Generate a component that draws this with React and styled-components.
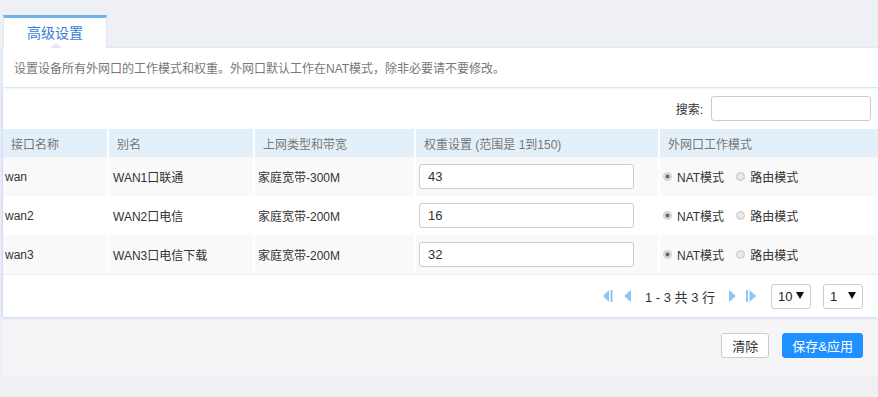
import React from 'react';
import styled, { createGlobalStyle } from 'styled-components';

const GlobalStyle = createGlobalStyle`
  html, body {
    margin: 0;
    padding: 0;
    background: #eef0f4;
    font-family: "Liberation Sans", "Noto Sans CJK SC", sans-serif;
    font-size: 12px;
    color: #333;
  }
`;

const Page = styled.div`
  padding-top: 15px;
  padding-left: 3px;
  height: 397px;
  box-sizing: border-box;
  overflow: hidden;
`;

const TabBar = styled.div`
  display: flex;
  height: 33px;
`;

const Tab = styled.div`
  position: relative;
  width: 104px;
  box-sizing: border-box;
  background: #fff;
  border-top: 3px solid #6db3f2;
  border-left: 1px solid #e2e6ee;
  border-right: 1px solid #e2e6ee;
  color: #3a7bd5;
  font-size: 14px;
  display: flex;
  align-items: center;
  justify-content: center;
  padding-bottom: 2px;

  &:after {
    content: '';
    position: absolute;
    left: 46px;
    bottom: 0;
    border-width: 0 6px 5px 6px;
    border-style: solid;
    border-color: transparent transparent #e4e8f0 transparent;
  }
`;

const Workspace = styled.div`
  background: #f5f5f7;
  height: 328px;
`;

const Panel = styled.div`
  background: #fff;
  box-shadow: 0 1px 3px #c8d6f6, -1px 0 2px #d4e0f8;
`;

const Desc = styled.div`
  height: 40px;
  box-sizing: border-box;
  padding-left: 11px;
  display: flex;
  align-items: center;
  color: #777;
  font-size: 12px;
  border-bottom: 1px solid #dbe6f8;
  box-shadow: 0 1px 2px #eef3fc;
`;

const SearchRow = styled.div`
  height: 41px;
  display: flex;
  align-items: center;
  justify-content: flex-end;
  padding-right: 7px;
  gap: 8px;
  color: #333;
`;

const TextInput = styled.input`
  box-sizing: border-box;
  width: ${({ w }) => w}px;
  height: 25px;
  border: 1px solid #ccc;
  border-radius: 3px;
  padding: 0 8px;
  font-family: "Liberation Sans", sans-serif;
  font-size: 13px;
  color: #333;
  outline: none;
  background: #fff;
`;

const Table = styled.table`
  width: 100%;
  border-collapse: collapse;
  table-layout: fixed;
`;

const Th = styled.th`
  height: 28px;
  background: #e3f0fa;
  color: #777;
  font-weight: normal;
  text-align: left;
  padding: 0 0 0 8px;
  border-right: 2px solid #fff;
  font-size: 12px;

  &:last-child {
    border-right: none;
  }
`;

const Tr = styled.tr`
  background: ${({ striped }) => (striped ? '#f9f9f9' : '#fff')};
`;

const Td = styled.td`
  height: 39px;
  padding: 0 0 0 ${({ pad }) => pad ?? 3}px;
  border-right: 2px solid #fff;
  color: #333;
  font-size: 12px;

  &:last-child {
    border-right: none;
  }
`;

const RadioGroup = styled.div`
  display: flex;
  align-items: center;
  gap: 12px;
`;

const Radio = styled.label`
  display: flex;
  align-items: center;
  gap: 5px;
  color: #333;
`;

const Dot = styled.span`
  width: 9px;
  height: 9px;
  box-sizing: border-box;
  border-radius: 50%;
  border: 1px solid #c9c9c9;
  background: radial-gradient(circle, ${({ on }) => (on ? '#666 0, #666 1.5px, #e6e6e6 2.5px' : '#ececec 0')}, #e0e0e0 100%);
`;

const TableFoot = styled.div`
  border-top: 1px solid #eee;
  height: 42px;
  display: flex;
  align-items: center;
  justify-content: flex-end;
  padding-right: 15px;
`;

const Pager = styled.div`
  display: flex;
  align-items: center;
  margin-right: 14px;
`;

const PageIcon = styled.svg`
  width: 12px;
  height: 14px;
  margin-right: ${({ mr }) => mr}px;
  fill: #8ec4f6;
`;

const PageText = styled.span`
  font-family: "Liberation Sans", "Noto Sans CJK SC", sans-serif;
  font-size: 13px;
  color: #333;
  margin: 0 11px 0 2px;
`;

const Select = styled.div`
  box-sizing: border-box;
  width: 40px;
  height: 25px;
  border: 1px solid #ccc;
  border-radius: 3px;
  display: flex;
  align-items: center;
  padding-left: 6px;
  margin-left: ${({ ml }) => ml}px;
  font-size: 13px;
  color: #222;
  position: relative;
  background: #fff;
`;

const Arrow = styled.span`
  position: absolute;
  right: 6px;
  top: 7px;
  border-width: 7px 4px 0 4px;
  border-style: solid;
  border-color: #111 transparent transparent transparent;
`;

const Actions = styled.div`
  display: flex;
  justify-content: flex-end;
  gap: 13px;
  padding: 16px 15px 0 0;
`;

const Button = styled.button`
  height: 25px;
  box-sizing: border-box;
  padding: 0 ${({ primary }) => (primary ? 9 : 10)}px;
  border-radius: 3px;
  border: 1px solid ${({ primary }) => (primary ? '#1e90ff' : '#ccc')};
  background: ${({ primary }) => (primary ? '#1e90ff' : '#fff')};
  color: ${({ primary }) => (primary ? '#fff' : '#333')};
  font-family: "Liberation Sans", "Noto Sans CJK SC", sans-serif;
  font-size: 13px;
  cursor: pointer;
`;

const rows = [
  { name: 'wan', alias: 'WAN1口联通', type: '家庭宽带-300M', weight: '43' },
  { name: 'wan2', alias: 'WAN2口电信', type: '家庭宽带-200M', weight: '16' },
  { name: 'wan3', alias: 'WAN3口电信下载', type: '家庭宽带-200M', weight: '32' },
];

const First = () => (
  <PageIcon viewBox="0 0 12 14" mr={8}>
    <polygon points="7,1 7,13 1,7" />
    <rect x="8.5" y="1" width="2" height="12" />
  </PageIcon>
);
const Prev = () => (
  <PageIcon viewBox="0 0 12 14" mr={9}>
    <polygon points="9,1 9,13 2,7" />
  </PageIcon>
);
const Next = () => (
  <PageIcon viewBox="0 0 12 14" mr={7}>
    <polygon points="3,1 3,13 10,7" />
  </PageIcon>
);
const Last = () => (
  <PageIcon viewBox="0 0 12 14" mr={0}>
    <rect x="1" y="1" width="2" height="12" />
    <polygon points="4.5,1 4.5,13 11,7" />
  </PageIcon>
);

export default function App() {
  return (
    <>
      <GlobalStyle />
      <Page>
        <TabBar>
          <Tab>高级设置</Tab>
        </TabBar>
        <Workspace>
          <Panel>
            <Desc>设置设备所有外网口的工作模式和权重。外网口默认工作在NAT模式，除非必要请不要修改。</Desc>
            <SearchRow>
              <span>搜索:</span>
              <TextInput w={160} />
            </SearchRow>
            <Table>
              <colgroup>
                <col style={{ width: 105 }} />
                <col style={{ width: 146 }} />
                <col style={{ width: 161 }} />
                <col style={{ width: 244 }} />
                <col />
              </colgroup>
              <thead>
                <tr>
                  <Th>接口名称</Th>
                  <Th>别名</Th>
                  <Th>上网类型和带宽</Th>
                  <Th>权重设置 (范围是 1到150)</Th>
                  <Th>外网口工作模式</Th>
                </tr>
              </thead>
              <tbody>
                {rows.map((r, i) => (
                  <Tr key={r.name} striped={i % 2 === 0}>
                    <Td pad={2}>{r.name}</Td>
                    <Td pad={4}>{r.alias}</Td>
                    <Td pad={3}>{r.type}</Td>
                    <Td pad={3}>
                      <TextInput w={215} defaultValue={r.weight} />
                    </Td>
                    <Td pad={3}>
                      <RadioGroup>
                        <Radio><Dot on />NAT模式</Radio>
                        <Radio><Dot />路由模式</Radio>
                      </RadioGroup>
                    </Td>
                  </Tr>
                ))}
              </tbody>
            </Table>
            <TableFoot>
              <Pager>
                <First />
                <Prev />
                <PageText>1 - 3 共 3 行</PageText>
                <Next />
                <Last />
              </Pager>
              <Select>
                <span>10</span>
                <Arrow />
              </Select>
              <Select ml={12}>
                <span>1</span>
                <Arrow />
              </Select>
            </TableFoot>
          </Panel>
          <Actions>
            <Button>清除</Button>
            <Button primary>保存&amp;应用</Button>
          </Actions>
        </Workspace>
      </Page>
    </>
  );
}
